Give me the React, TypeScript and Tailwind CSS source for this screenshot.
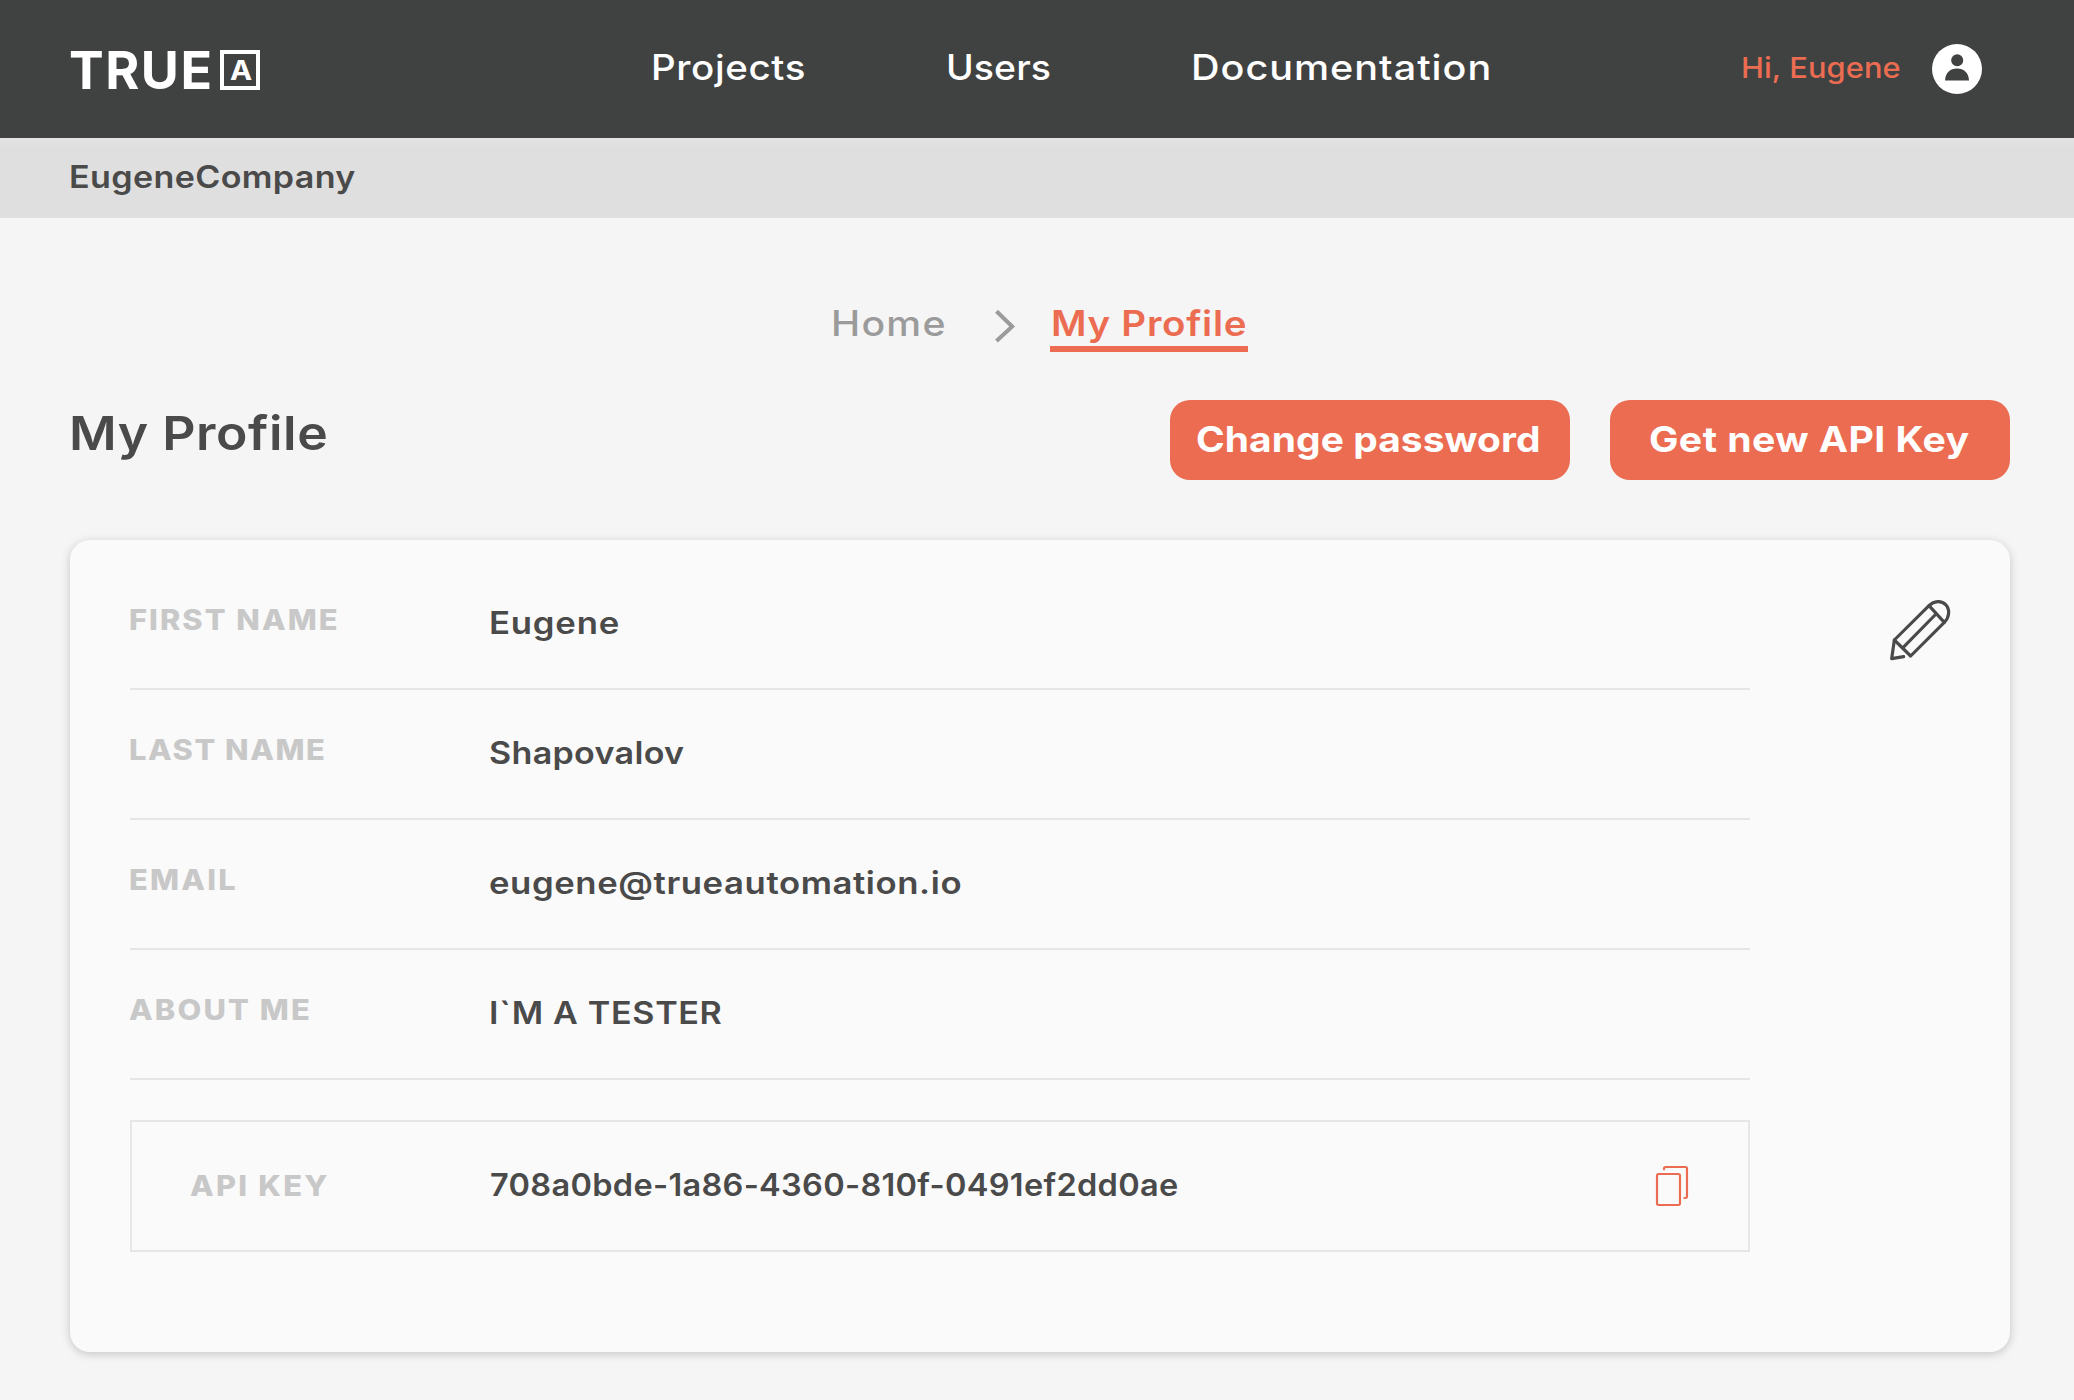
import type { ReactNode } from "react";

function Stretch({ children, className = "" }: { children: ReactNode; className?: string }) {
  return <span className={`inline-block origin-left whitespace-pre ${className}`}>{children}</span>;
}

function Logo() {
  return (
    <div className="flex w-[580px] items-center pt-0.5 text-white">
      <span className="-ml-[1px] w-[151px] pt-0.5 text-[52px] leading-[52px] font-bold tracking-[1.5px]">TRUE</span>
      <span className="flex size-10 items-center justify-center border-4 border-white text-[27px] leading-none font-bold">
        <Stretch className="origin-center scale-x-110">A</Stretch>
      </span>
    </div>
  );
}

function AvatarIcon() {
  return (
    <svg viewBox="0 0 50 50" className="size-[50px]">
      <circle cx="25" cy="25" r="25" fill="#fff" />
      <circle cx="25.2" cy="16.2" r="6" fill="#404241" />
      <path d="M13 36.500C13.300 29 18 24.600 25 24.600S36.700 29 37 36.500Z" fill="#404241" />
    </svg>
  );
}

function PencilIcon() {
  return (
    <svg
      viewBox="84 84 192 192"
      className="size-16"
      fill="none"
      stroke="#4a4a4a"
      strokeWidth="9.5"
      strokeLinecap="round"
      strokeLinejoin="round"
    >
      <path d="M207 107 103 210 152 258 253 157Z" />
      <path d="M207 107C222 92 245 91 257 104C270 118 269 141 253 157" />
      <path d="M228 132 129 233" />
      <path d="M103 210 95 266 131 260" />
    </svg>
  );
}

function CopyIcon() {
  return (
    <svg
      viewBox="75 165 102 126"
      className="h-[42px] w-[34px]"
      fill="none"
      stroke="#ec6c52"
      strokeWidth="6.5"
      strokeLinecap="round"
    >
      <rect x="81" y="192" width="69" height="93" rx="5" />
      <path d="M102 178V176Q102 171 107 171H166Q171 171 171 176V259Q171 264 166 264H163" />
    </svg>
  );
}

const rows = [
  { label: "FIRST NAME", value: "Eugene", labelClass: "tracking-[1.85px]", valueClass: "scale-x-112 tracking-[0.7px]" },
  { label: "LAST NAME", value: "Shapovalov", labelClass: "tracking-[1.4px]", valueClass: "scale-x-110 tracking-[0.27px]" },
  { label: "EMAIL", value: "eugene@trueautomation.io", labelClass: "tracking-[2px]", valueClass: "scale-x-112 tracking-[0.52px]" },
  { label: "ABOUT ME", value: "I`M A TESTER", labelClass: "tracking-[1.95px]", valueClass: "scale-x-110 tracking-[0.6px]" },
];

const labelText = "text-[28px] leading-9 font-extrabold text-[#c8c8c8] scale-x-110";
const valueText = "text-[31px] leading-10 font-semibold text-[#4a4a4a]";

export default function App() {
  return (
    <div className="h-[1400px] w-[2074px] overflow-hidden bg-[#f5f5f5] font-['Inter','Liberation_Sans',sans-serif]">
      <header className="flex h-[138px] items-center bg-[#404241] pl-[70px]">
        <Logo />
        <nav className="flex w-[1090px] pb-1 pl-px text-[35px] leading-[44px] font-[550] text-white">
          <a className="w-[295px]">
            <Stretch className="scale-x-110 tracking-[0.55px]">Projects</Stretch>
          </a>
          <a className="w-[245px]">
            <Stretch className="scale-x-107 tracking-[0.1px]">Users</Stretch>
          </a>
          <a>
            <Stretch className="scale-x-113 tracking-[0.87px]">Documentation</Stretch>
          </a>
        </nav>
        <div className="flex items-center">
          <span className="w-48 pb-[3px] pl-px text-[28px] leading-9 font-[550] text-[#ec6c52]">
            <Stretch className="scale-x-110 tracking-[0.08px]">Hi, Eugene</Stretch>
          </span>
          <AvatarIcon />
        </div>
      </header>

      <div className="flex h-20 items-center bg-[linear-gradient(#e3e3e3,#dfdfdf_10px)] pb-[3px] pl-[69px] text-[31px] leading-10 font-semibold text-[#4a4a4a]">
        <Stretch className="scale-x-110 tracking-[0.32px]">EugeneCompany</Stretch>
      </div>

      <main className="px-16 pt-[87px]">
        <div className="flex items-start pl-[767px] text-[35px] leading-9">
          <span className="w-[163px] font-[550] text-[#9b9b9b]">
            <Stretch className="scale-x-112 tracking-[1.1px]">Home</Stretch>
          </span>
          <svg viewBox="0 0 22 34" className="mt-1 mr-[34px] h-[34px] w-[22px]" fill="none" stroke="#9b9b9b" strokeWidth="4">
            <path d="M2.500 2.200 18.200 17.500 2.500 32" />
          </svg>
          <span className="w-[198px] border-b-6 border-[#ec6c52] pb-[5px] font-semibold text-[#ec6c52]">
            <Stretch className="ml-px scale-x-110 tracking-[0.65px]">My Profile</Stretch>
          </span>
        </div>

        <div className="mt-12 flex h-20 items-center pl-[5px]">
          <h1 className="grow pb-3.5 text-[47px] leading-[56px] font-semibold text-[#4a4a4a]">
            <Stretch className="scale-x-110 tracking-[0.5px]">My Profile</Stretch>
          </h1>
          <button className="flex h-20 w-[400px] items-center rounded-[20px] bg-[#ec6c52] pb-[3px] pl-[26px] text-[35px] leading-[44px] font-bold text-white">
            <Stretch className="scale-x-111 tracking-[0.08px]">Change password</Stretch>
          </button>
          <button className="ml-10 flex h-20 w-[400px] items-center rounded-[20px] bg-[#ec6c52] pb-[3px] pl-[39px] text-[35px] leading-[44px] font-bold text-white">
            <Stretch className="scale-x-112 tracking-[0.39px]">Get new API Key</Stretch>
          </button>
        </div>

        <section className="mt-[60px] ml-1.5 flex h-[812px] w-[1940px] items-start rounded-[20px] bg-[#fafafa] pt-5 pl-[60px] shadow-[0_2px_10px_rgba(0,0,0,0.2)]">
          <div className="w-[1620px]">
            {rows.map((row) => (
              <div key={row.label} className="flex h-[130px] items-center border-b-2 border-[#e6e6e6]">
                <span className="-ml-px w-[360px] pb-2">
                  <Stretch className={`${labelText} ${row.labelClass}`}>{row.label}</Stretch>
                </span>
                <span className="pb-[3px]">
                  <Stretch className={`${valueText} ${row.valueClass}`}>{row.value}</Stretch>
                </span>
              </div>
            ))}
            <div className="mt-10 flex h-[132px] items-center border-2 border-[#e6e6e6] pl-[58px]">
              <span className="w-[300px]">
                <Stretch className={`${labelText} tracking-[2.05px]`}>API KEY</Stretch>
              </span>
              <span className="w-[1165px] pb-[3px]">
                <Stretch className={`${valueText} scale-x-105 tracking-[0.28px]`}>
                  708a0bde-1a86-4360-810f-0491ef2dd0ae
                </Stretch>
              </span>
              <CopyIcon />
            </div>
          </div>
          <div className="mt-[38px] ml-[138px]">
            <PencilIcon />
          </div>
        </section>
      </main>
    </div>
  );
}
